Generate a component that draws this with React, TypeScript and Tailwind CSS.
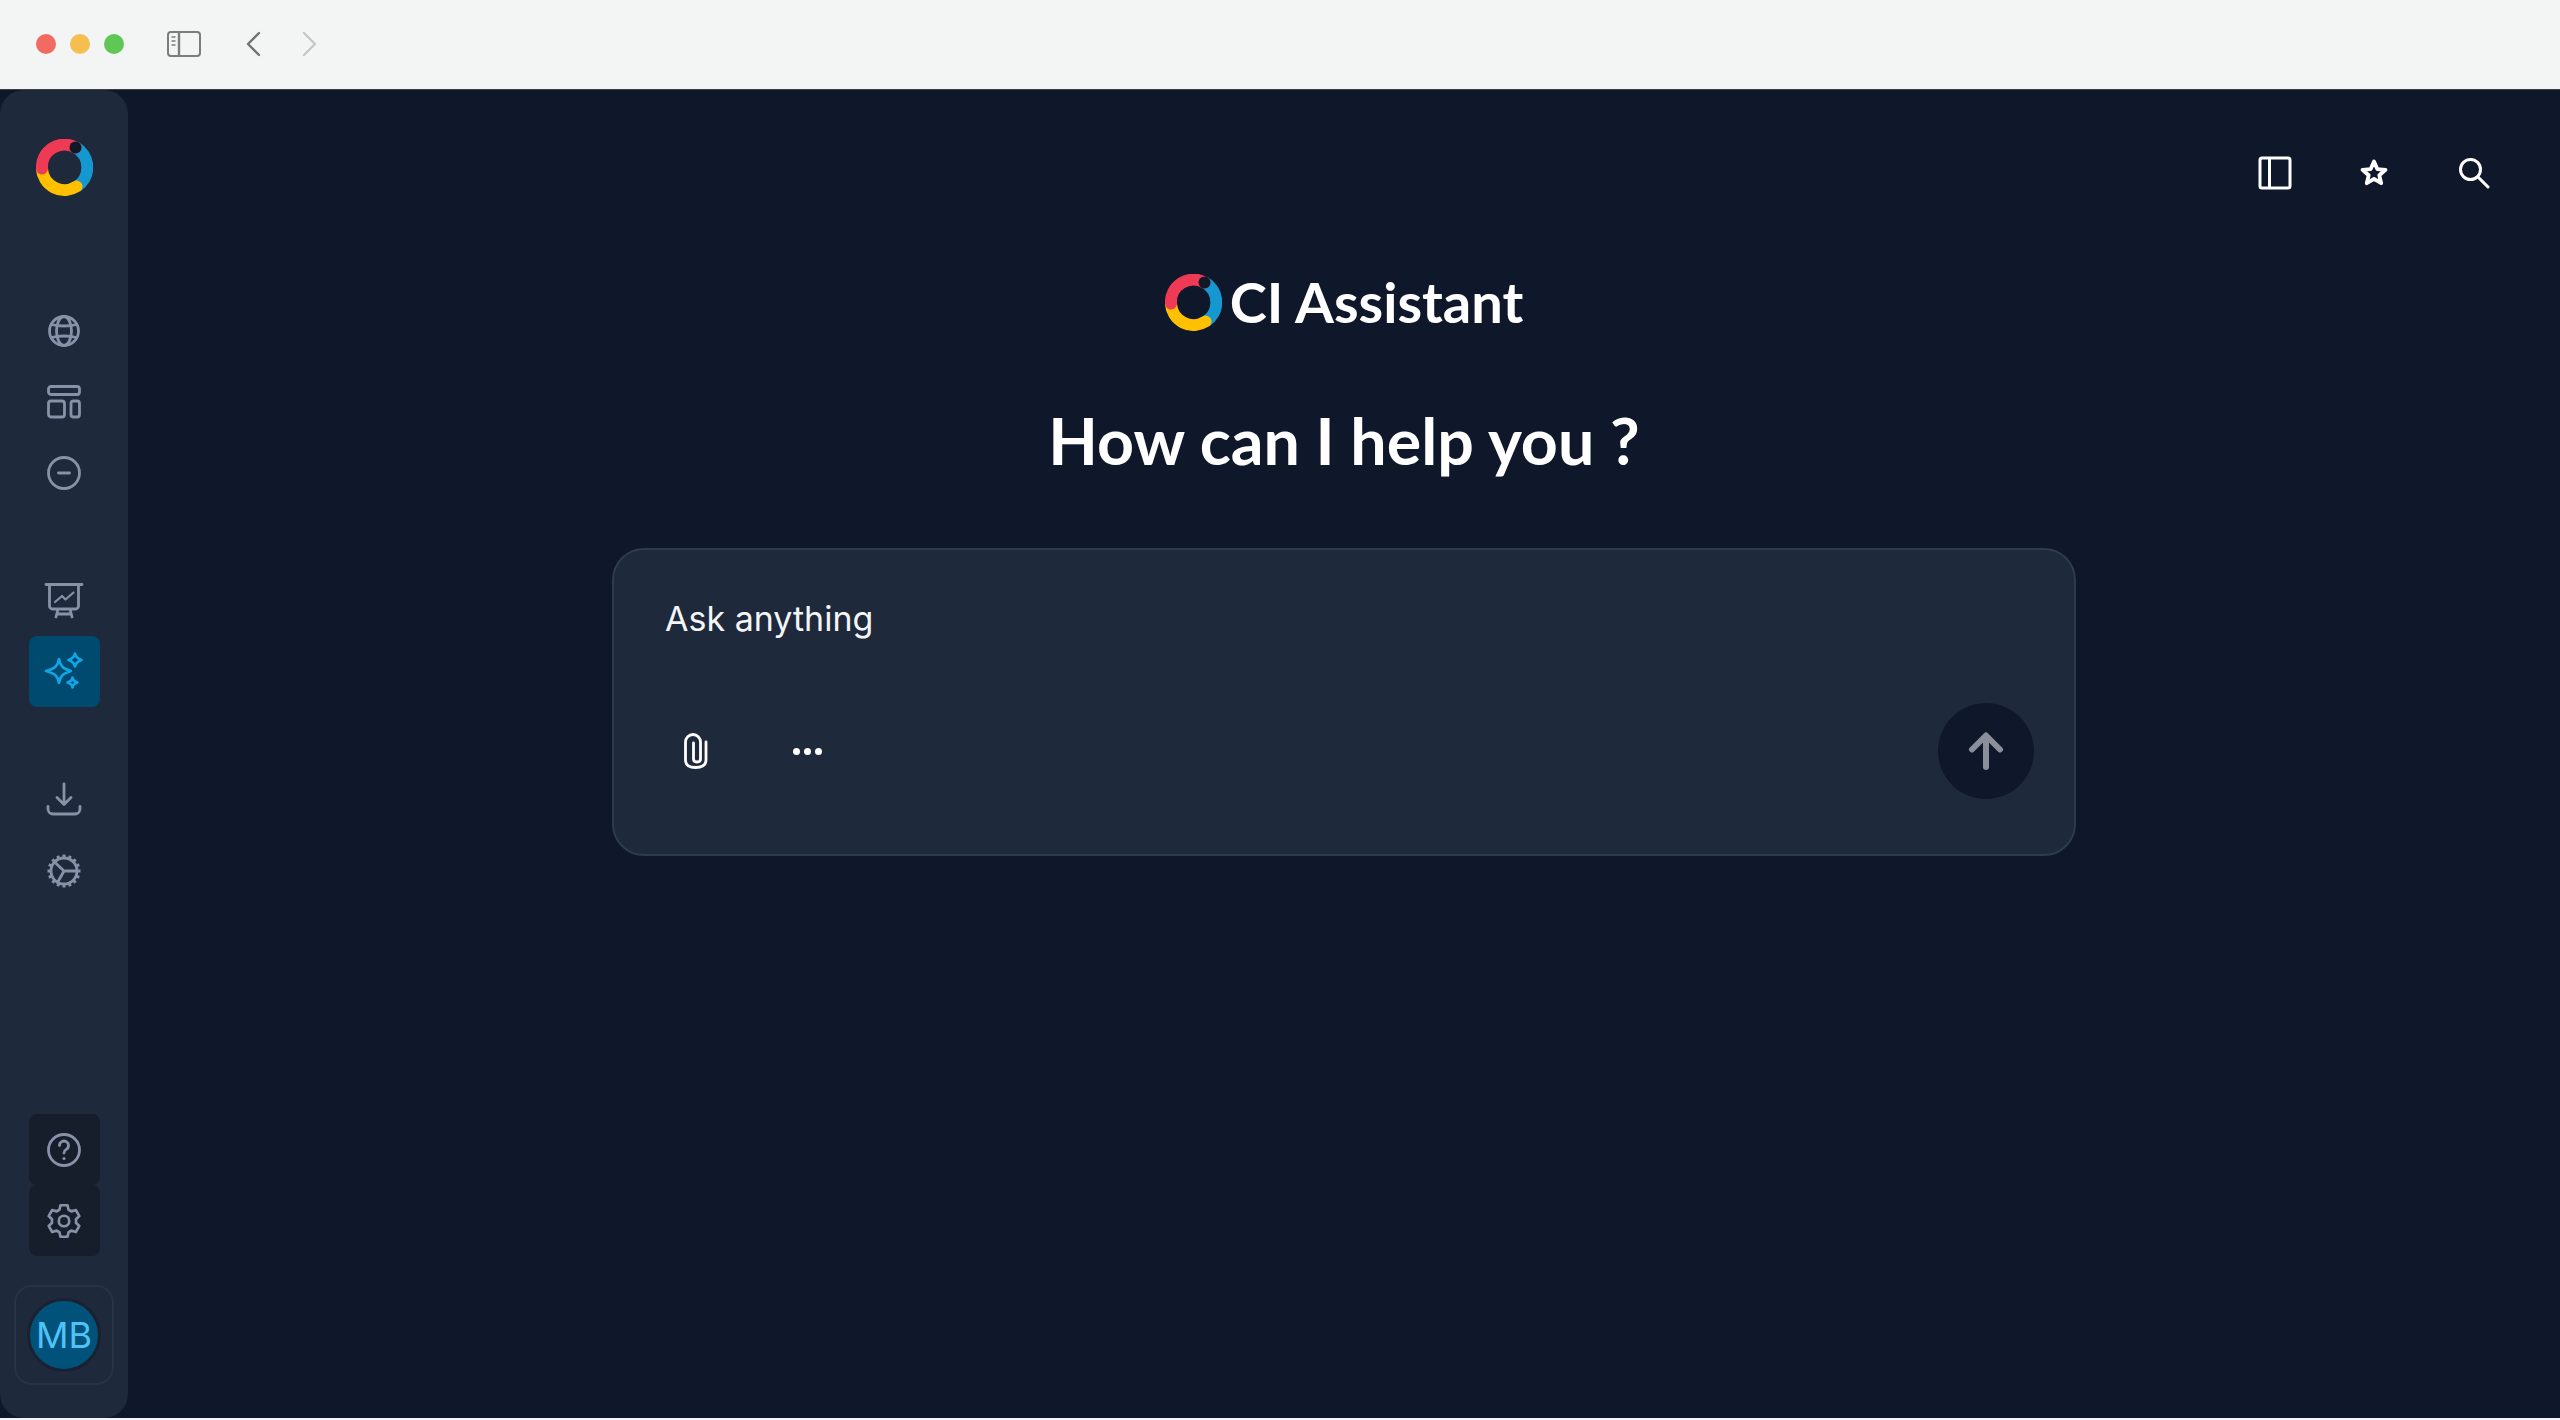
import React from "react";

const Logo = ({ className }: { className: string }) => (
  <svg viewBox="0 0 57 57" className={className} fill="none">
    <path d="M40 8.5A23 23 0 0 1 41 47.5" stroke="#1597cf" strokeWidth="12" />
    <path d="M6 30A22.5 22.5 0 0 0 40.5 47.5" stroke="#ffc000" strokeWidth="12" strokeLinecap="round" />
    <path d="M6 29.5A22.5 22.5 0 0 1 39.5 8.5" stroke="#ef3a56" strokeWidth="12" strokeLinecap="round" />
    <circle cx="39.5" cy="8.5" r="6" fill="#111827" />
  </svg>
);

type IconProps = { children: React.ReactNode; className?: string };
const I = ({ children, className = "text-[#8792a8]" }: IconProps) => (
  <svg viewBox="0 0 36 36" fill="none" stroke="currentColor" strokeWidth="2.8" strokeLinecap="round" strokeLinejoin="round" className={`w-9 h-9 overflow-visible ${className}`}>
    {children}
  </svg>
);

const Slot = ({ children, className = "" }: { children: React.ReactNode; className?: string }) => (
  <div className={`w-[71px] h-[71px] flex items-center justify-center rounded-lg ${className}`}>{children}</div>
);

const gearTeeth = Array.from({ length: 16 }, (_, i) => (i * 360) / 16);

export default function App() {
  return (
    <div className="w-full h-screen flex flex-col bg-[#f3f5f4] overflow-hidden" style={{ fontFamily: "Inter, sans-serif" }}>
      <header className="h-[90px] shrink-0 flex items-center pb-[1px] bg-[#f3f5f4] border-b border-[#3b3f46]">
        <div className="flex gap-[14px] pl-[36px]">
          <span className="w-[20px] h-[20px] rounded-full bg-[#f26b62]" />
          <span className="w-[20px] h-[20px] rounded-full bg-[#f6bd50]" />
          <span className="w-[20px] h-[20px] rounded-full bg-[#60c655]" />
        </div>
        <svg viewBox="0 0 34 26" className="w-[34px] h-[26px] ml-[43px]" fill="none" stroke="#7c7c7c" strokeWidth="2">
          <rect x="1" y="1" width="32" height="24" rx="3" />
          <path d="M12 1v24" strokeWidth="2.4" />
          <path d="M4.5 6h4M4.5 10h4M4.5 14h4" strokeWidth="1.5" />
        </svg>
        <svg viewBox="0 0 16 26" className="w-[16px] h-[26px] ml-[44px]" fill="none" stroke="#737373" strokeWidth="2.4" strokeLinecap="round" strokeLinejoin="round">
          <path d="M14 2 3 13l11 11" />
        </svg>
        <svg viewBox="0 0 16 26" className="w-[16px] h-[26px] ml-[41px]" fill="none" stroke="#c6c6c6" strokeWidth="2.4" strokeLinecap="round" strokeLinejoin="round">
          <path d="m2 2 11 11L2 24" />
        </svg>
      </header>

      <div className="flex-1 min-h-0 flex bg-[#0f172a]">
        <aside className="w-[128px] shrink-0 bg-[#1e293b] rounded-[24px] flex flex-col items-center pt-[49px] pb-[33px]">
          <Logo className="w-[57px] h-[57px]" />
          <nav className="mt-[99px] flex flex-col items-center">
            <Slot>
              <I>
                <circle cx="18" cy="18" r="14.5" />
                <ellipse cx="18" cy="18" rx="7.5" ry="14.5" />
                <path d="M5.5 11.5c7 2 18 2 25 0M5.5 24.5c7-2 18-2 25 0" />
              </I>
            </Slot>
            <Slot>
              <I>
                <rect x="2.5" y="2.5" width="31" height="8" rx="2.5" />
                <rect x="2.5" y="17" width="16" height="16" rx="2.5" />
                <rect x="25" y="17" width="8.5" height="16" rx="2.5" />
              </I>
            </Slot>
            <Slot>
              <I>
                <circle cx="18" cy="18" r="15.5" />
                <path d="M12.5 18h11" />
              </I>
            </Slot>
          </nav>
          <div className="mt-[57px] flex flex-col items-center">
            <Slot>
              <I>
                <path d="M0 1.500h36M3.500 2v21a3 3 0 0 0 3 3h23a3 3 0 0 0 3-3V2M12 26l-2 8M24 26l2 8M11 31h14" />
                <path d="m9 19 7-6 3.500 3.500 8-7" strokeWidth="2.200" />
              </I>
            </Slot>
            <Slot className="bg-[#004a70]">
              <svg viewBox="0 0 40 40" className="w-10 h-10 text-[#10a5e6]" fill="none" stroke="currentColor" strokeWidth="2.6" strokeLinejoin="round">
                <path d="M15 7c1 6.500 3.500 9.500 12 12-8.500 2.500-11 5.500-12 12-1-6.500-3.500-9.500-13-12 9.500-2.500 12-5.500 13-12Z" />
                <path d="M31 1.500c.6 3.500 2 5 6.500 6.500-4.500 1.500-5.900 3-6.500 6.500-.6-3.500-2-5-6.500-6.500 4.500-1.500 5.900-3 6.500-6.500Z" />
                <path d="M28.500 25.500c.4 2.800 1.500 4 5 5-3.500 1-4.600 2.200-5 5-.4-2.800-1.500-4-5-5 3.500-1 4.600-2.200 5-5Z" />
              </svg>
            </Slot>
          </div>
          <div className="mt-[57px] flex flex-col items-center">
            <Slot>
              <I>
                <path d="M18 2v20M11 15.500l7 7 7-7M2 24.500v2.500a5 5 0 0 0 5 5h22a5 5 0 0 0 5-5v-2.500" />
              </I>
            </Slot>
            <Slot>
              <I>
                <circle cx="18" cy="18" r="13" />
                <path d="M18 18 8.500 9M18 18h13M18 18l-6.500 11.500" />
                {gearTeeth.map((a) => (
                  <path key={a} d="M18 1.500v3.500" strokeWidth="3" transform={`rotate(${a} 18 18)`} strokeLinecap="butt" />
                ))}
              </I>
            </Slot>
          </div>
          <div className="mt-auto flex flex-col items-center">
            <Slot className="bg-[#171e2b]">
              <I>
                <circle cx="18" cy="18" r="15.500" />
                <path d="M13.500 13.500a4.500 4.500 0 1 1 6.800 3.900c-1.500.9-2.300 1.800-2.300 3.600" />
                <path d="M18 26.500v.1" strokeWidth="3" />
              </I>
            </Slot>
            <Slot className="bg-[#171e2b]">
              <svg viewBox="0 0 24 24" className="w-9 h-9 text-[#8792a8]" fill="none" stroke="currentColor" strokeWidth="1.800" strokeLinecap="round" strokeLinejoin="round">
                <path d="M9.670 1.500h4.660l.7 3a7.700 7.700 0 0 1 1.900 1.100l2.950-.9 2.330 4.030-2.250 2.100a7.700 7.700 0 0 1 0 2.340l2.250 2.100-2.330 4.030-2.950-.9a7.700 7.700 0 0 1-1.900 1.100l-.7 3H9.670l-.7-3a7.700 7.700 0 0 1-1.900-1.100l-2.950.9-2.330-4.030 2.250-2.100a7.700 7.700 0 0 1 0-2.340l-2.250-2.100L4.120 4.700l2.950.9a7.700 7.700 0 0 1 1.900-1.100Z" />
                <circle cx="12" cy="12" r="3.500" />
              </svg>
            </Slot>
          </div>
          <div className="mt-[29px] w-[100px] h-[100px] rounded-[18px] border-2 border-[#283345] flex items-center justify-center">
            <div className="w-[74px] h-[74px] rounded-full bg-[#00527a] border-[3px] border-[#1a2130] flex items-center justify-center text-[36px] text-[#4fc3f7]">
              MB
            </div>
          </div>
        </aside>

        <main className="flex-1 min-w-0 flex flex-col items-center">
          <div className="self-stretch flex justify-end items-center pt-[66px] pr-[70px]">
            <svg viewBox="0 0 34 34" className="w-[34px] h-[34px]" fill="none" stroke="white" strokeWidth="3" strokeLinejoin="round">
              <rect x="2" y="2" width="30" height="30" rx="2" />
              <path d="M11.500 2v30" />
            </svg>
            <svg viewBox="0 0 30 30" className="w-[30px] h-[30px] ml-[67px]" fill="none" stroke="white" strokeWidth="3.800" strokeLinejoin="round">
              <path d="m15 3.500 3.300 7.600 8.200.7-6.200 5.400 1.900 8-7.200-4.300-7.200 4.300 1.900-8-6.200-5.400 8.200-.7Z" />
            </svg>
            <svg viewBox="0 0 32 32" className="w-8 h-8 ml-[69px]" fill="none" stroke="white" strokeWidth="3" strokeLinecap="round">
              <circle cx="12.500" cy="12.500" r="10" />
              <path d="m20 20 10 10" />
            </svg>
          </div>
          <div className="mt-[83px] flex items-center gap-[8px] h-[58px]">
            <Logo className="w-[57px] h-[57px]" />
            <span className="text-[56px] font-bold text-white leading-none" style={{ fontFamily: "Lato, sans-serif" }}>CI Assistant</span>
          </div>
          <h1 className="mt-[73px] text-[64.5px] leading-[72px] font-bold text-white" style={{ fontFamily: "Lato, sans-serif" }}>How can I help you ?</h1>
          <div className="mt-[72px] w-[1464px] h-[308px] rounded-[32px] bg-[#1e293b] border-2 border-[#2d3b50] pl-[51px] pr-[40px] pt-[49px] pb-[53px] flex flex-col">
            <div className="text-[34px] leading-[40px] text-[#f3f5f7]">Ask anything</div>
            <div className="flex items-center mt-auto -translate-y-[2px]">
              <svg viewBox="0 0 24 36" className="w-6 h-9 ml-[19px]" fill="none" stroke="white" strokeWidth="2.800" strokeLinecap="round">
                <path d="M22 9v18c0 5-4 7.500-10.500 7.500S1.500 32 1.500 27V9a7.500 7.500 0 0 1 15 0v17c0 4-7 4-7 0V10" />
              </svg>
              <div className="flex gap-[4px] ml-[85px]">
                <span className="w-[7px] h-[7px] rounded-full bg-white" />
                <span className="w-[7px] h-[7px] rounded-full bg-white" />
                <span className="w-[7px] h-[7px] rounded-full bg-white" />
              </div>
              <div className="ml-auto w-[96px] h-[96px] rounded-full bg-[#0f172a] flex items-center justify-center">
                <svg viewBox="0 0 36 40" className="w-9 h-10" fill="none" stroke="#8b8f9a" strokeWidth="6" strokeLinecap="round" strokeLinejoin="round">
                  <path d="M18 36V5M4 18.500 18 4.500l14 14" />
                </svg>
              </div>
            </div>
          </div>
        </main>
      </div>
      <div className="h-[2px] shrink-0 bg-[#f3f5f4]" />
    </div>
  );
}
